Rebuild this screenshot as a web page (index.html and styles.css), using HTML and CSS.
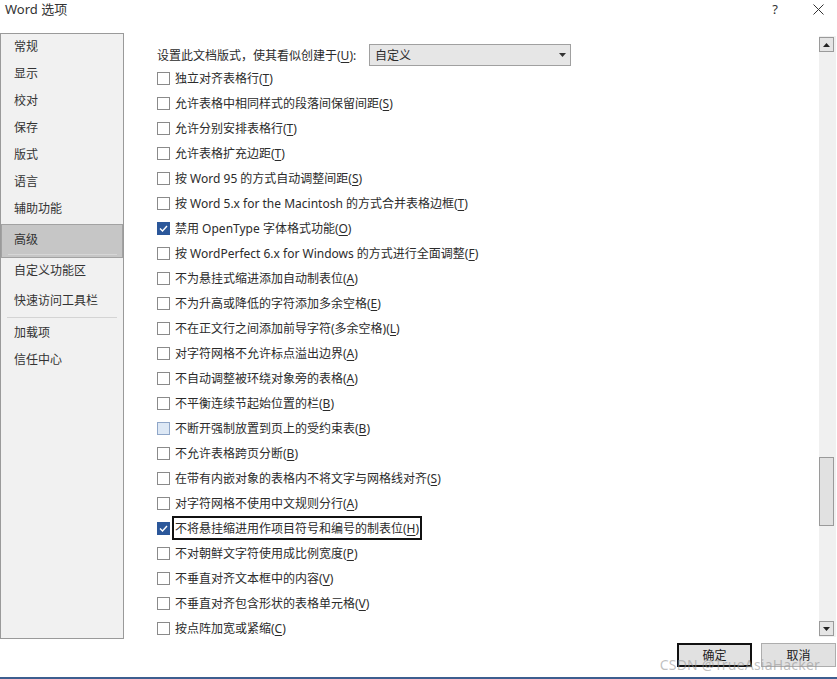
FILE: index.html
```html
<!DOCTYPE html>
<html lang="zh-CN">
<head>
    <meta charset="UTF-8">
    <title>Word 选项</title>
    <link rel="stylesheet" href="styles.css">
</head>
<body>
    <div class="dialog">
        <div class="titlebar">
            <div class="title">Word 选项</div>
            <div class="title-buttons">
                <span class="help">?</span>
                <svg class="close" width="11" height="11" viewBox="0 0 11 11">
                    <path d="M0.5 0.5 L10.5 10.5 M10.5 0.5 L0.5 10.5" stroke="#333" stroke-width="1" fill="none"/>
                </svg>
            </div>
        </div>

        <div class="main">
            <ul class="nav">
                <li>常规</li>
                <li>显示</li>
                <li>校对</li>
                <li>保存</li>
                <li>版式</li>
                <li>语言</li>
                <li>辅助功能</li>
                <li class="selected">高级</li>
                <li>自定义功能区</li>
                <li class="gap">快速访问工具栏</li>
                <li class="sep"></li>
                <li>加载项</li>
                <li>信任中心</li>
            </ul>

            <div class="content">
                <div class="options">
                    <div class="layout-row">
                        <span class="layout-label">设置此文档版式，使其看似创建于(<u>U</u>):</span>
                        <div class="select">
                            <span>自定义</span>
                            <svg width="7" height="4" viewBox="0 0 7 4"><path d="M0 0 H7 L3.5 4 Z" fill="#333"/></svg>
                        </div>
                    </div>

                    <div class="opt"><span class="box"></span><span>独立对齐表格行(<u>T</u>)</span></div>
                    <div class="opt"><span class="box"></span><span>允许表格中相同样式的段落间保留间距(<u>S</u>)</span></div>
                    <div class="opt"><span class="box"></span><span>允许分别安排表格行(<u>T</u>)</span></div>
                    <div class="opt"><span class="box"></span><span>允许表格扩充边距(<u>T</u>)</span></div>
                    <div class="opt"><span class="box"></span><span>按 Word 95 的方式自动调整间距(<u>S</u>)</span></div>
                    <div class="opt"><span class="box"></span><span>按 Word 5.x for the Macintosh 的方式合并表格边框(<u>T</u>)</span></div>
                    <div class="opt"><span class="box checked"><svg width="9" height="7" viewBox="0 0 9 7"><path d="M1 3.5 L3.5 6 L8 1" stroke="#fff" stroke-width="1.4" fill="none"/></svg></span><span>禁用 OpenType 字体格式功能(<u>O</u>)</span></div>
                    <div class="opt"><span class="box"></span><span>按 WordPerfect 6.x for Windows 的方式进行全面调整(<u>F</u>)</span></div>
                    <div class="opt"><span class="box"></span><span>不为悬挂式缩进添加自动制表位(<u>A</u>)</span></div>
                    <div class="opt"><span class="box"></span><span>不为升高或降低的字符添加多余空格(<u>E</u>)</span></div>
                    <div class="opt"><span class="box"></span><span>不在正文行之间添加前导字符(多余空格)(<u>L</u>)</span></div>
                    <div class="opt"><span class="box"></span><span>对字符网格不允许标点溢出边界(<u>A</u>)</span></div>
                    <div class="opt"><span class="box"></span><span>不自动调整被环绕对象旁的表格(<u>A</u>)</span></div>
                    <div class="opt"><span class="box"></span><span>不平衡连续节起始位置的栏(<u>B</u>)</span></div>
                    <div class="opt"><span class="box hover"></span><span>不断开强制放置到页上的受约束表(<u>B</u>)</span></div>
                    <div class="opt"><span class="box"></span><span>不允许表格跨页分断(<u>B</u>)</span></div>
                    <div class="opt"><span class="box"></span><span>在带有内嵌对象的表格内不将文字与网格线对齐(<u>S</u>)</span></div>
                    <div class="opt"><span class="box"></span><span>对字符网格不使用中文规则分行(<u>A</u>)</span></div>
                    <div class="opt"><span class="box checked"><svg width="9" height="7" viewBox="0 0 9 7"><path d="M1 3.5 L3.5 6 L8 1" stroke="#fff" stroke-width="1.4" fill="none"/></svg></span><span class="focused">不将悬挂缩进用作项目符号和编号的制表位(<u>H</u>)</span></div>
                    <div class="opt"><span class="box"></span><span>不对朝鲜文字符使用成比例宽度(<u>P</u>)</span></div>
                    <div class="opt"><span class="box"></span><span>不垂直对齐文本框中的内容(<u>V</u>)</span></div>
                    <div class="opt"><span class="box"></span><span>不垂直对齐包含形状的表格单元格(<u>V</u>)</span></div>
                    <div class="opt"><span class="box"></span><span>按点阵加宽或紧缩(<u>C</u>)</span></div>
                </div>

                <div class="scrollbar">
                    <div class="sb-btn"><svg width="7" height="4" viewBox="0 0 7 4"><path d="M3.5 0 L7 4 H0 Z" fill="#222"/></svg></div>
                    <div class="sb-track">
                        <div class="sb-thumb"></div>
                    </div>
                    <div class="sb-btn"><svg width="7" height="4" viewBox="0 0 7 4"><path d="M0 0 H7 L3.5 4 Z" fill="#222"/></svg></div>
                </div>
            </div>
        </div>

        <div class="footer">
            <button class="btn default">确定</button>
            <button class="btn">取消</button>
            <span class="watermark">CSDN @TrueAsiaHacker</span>
        </div>
    </div>
</body>
</html>
```

FILE: styles.css
```css
* {
    margin: 0;
    padding: 0;
    box-sizing: border-box;
}

body {
    font-family: "Noto Sans", "Noto Sans CJK SC", sans-serif;
    font-size: 12px;
    color: #2b2b2b;
    background: #fff;
}

.dialog {
    width: 837px;
    height: 679px;
    display: flex;
    flex-direction: column;
    border-bottom: 2px solid #3d5e8f;
    position: relative;
}

.titlebar {
    height: 33px;
    display: flex;
    justify-content: space-between;
    align-items: flex-start;
    padding: 0 13px 0 5px;
}

.title {
    font-size: 13px;
    line-height: 18px;
    color: #333;
}

.title-buttons {
    display: flex;
    align-items: center;
    gap: 35px;
    height: 18px;
}

.help {
    font-size: 13px;
    color: #333;
}

.main {
    height: 606px;
    display: flex;
}

/* left navigation */
.nav {
    list-style: none;
    width: 124px;
    background: #f1f1f1;
    border: 1px solid #9a9a9a;
    font-size: 12px;
}

.nav li {
    height: 27px;
    line-height: 25px;
    padding-left: 13px;
    color: #333;
}

.nav li.selected {
    height: 34px;
    line-height: 30px;
    margin-top: 1px;
    background: #c6c6c6;
    border: 1px solid #a2a2a2;
    padding-left: 12px;
    position: relative;
}

.nav li.selected::after {
    content: "";
    position: absolute;
    left: 6px;
    right: 5px;
    bottom: 2px;
    height: 1px;
    background: #d6d6d6;
}

.nav li.gap {
    margin-top: 3px;
}

.nav li.sep {
    height: 1px;
    margin: 2px 6px 2px 6px;
    background: #d4d4d4;
}

/* options area */
.content {
    flex: 1;
    display: flex;
    padding-top: 3px;
    padding-bottom: 2px;
}

.options {
    flex: 1;
    padding: 8px 0 0 33px;
}

.layout-row {
    display: flex;
    align-items: center;
    height: 22px;
    margin-bottom: -0.5px;
}

.layout-label {
    width: 212px;
    white-space: nowrap;
}

.select {
    width: 202px;
    height: 22px;
    background: #e6e6e6;
    border: 1px solid #a0a0a0;
    display: flex;
    justify-content: space-between;
    align-items: center;
    padding: 0 4px 0 5px;
}

.opt {
    height: 25px;
    display: flex;
    align-items: center;
    white-space: nowrap;
}

.box {
    width: 13px;
    height: 13px;
    border: 1px solid #8a8a8a;
    background: #fff;
    margin-right: 5px;
    display: flex;
    align-items: center;
    justify-content: center;
    flex-shrink: 0;
}

.box.checked {
    background: #2b579a;
    border-color: #2b579a;
}

.box.hover {
    background: #dde8f5;
    border-color: #8fa6c8;
}

.focused {
    outline: 2px solid #111;
    outline-offset: 1px;
}

u {
    text-decoration-thickness: 1px;
    text-underline-offset: 2px;
}

/* scrollbar */
.scrollbar {
    width: 17px;
    margin-right: 1px;
    background: #f0f0f0;
    display: flex;
    flex-direction: column;
    padding: 1px 2px 1px 0;
}

.sb-btn {
    height: 15px;
    background: #e5e5e5;
    border: 1px solid #9a9a9a;
    display: flex;
    align-items: center;
    justify-content: center;
}

.sb-track {
    flex: 1;
    padding-top: 405px;
}

.sb-thumb {
    height: 69px;
    background: #e1e1e1;
    border: 1px solid #9a9a9a;
}

/* footer */
.footer {
    flex: 1;
    display: flex;
    justify-content: flex-end;
    align-items: flex-start;
    padding-top: 4px;
    gap: 9px;
    padding-right: 1px;
}

.btn {
    width: 75px;
    height: 24px;
    background: #e1e1e1;
    border: 1px solid #adadad;
    font-family: inherit;
    font-size: 12px;
    color: #222;
}

.btn.default {
    border: 2px solid #111;
}

.watermark {
    position: absolute;
    right: 17px;
    bottom: 3px;
    font-size: 14px;
    color: rgba(150, 150, 150, 0.6);
    letter-spacing: 0.2px;
}
```
